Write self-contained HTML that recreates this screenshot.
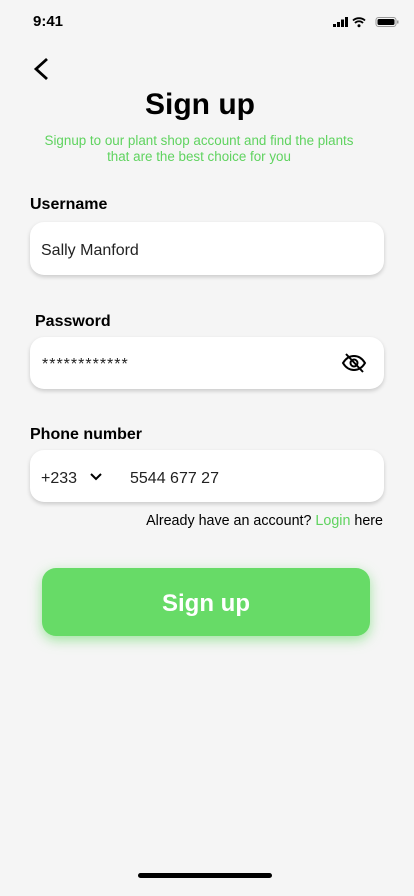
<!DOCTYPE html>
<html><head><style>
*{margin:0;padding:0;box-sizing:border-box}
body{width:414px;height:896px;background:#f5f5f5;font-family:"Liberation Sans",sans-serif;position:relative;overflow:hidden;color:#000}
.a{position:absolute}
.box{position:absolute;left:30px;width:354px;background:#fff;border-radius:14px;box-shadow:0 2px 4px rgba(0,0,0,.18)}
.lbl{position:absolute;font-weight:bold;font-size:16px}
.t{position:absolute;font-size:16px;color:#222}
</style></head><body>
<div class="a" style="left:33px;top:13px;font-weight:bold;font-size:15px">9:41</div>
<svg class="a" style="left:332px;top:16px" width="68" height="12" viewBox="0 0 68 12">
<rect x="1" y="8" width="3" height="3" fill="#000"/><rect x="5" y="6" width="3" height="5" fill="#000"/><rect x="9" y="3.5" width="3" height="7.5" fill="#000"/><rect x="13" y="1" width="3" height="10" fill="#000"/>
<path d="M21 4.5a9 9 0 0 1 12 0M23 7a5.5 5.5 0 0 1 8 0" stroke="#000" stroke-width="1.8" fill="none"/><circle cx="27" cy="9.8" r="1.5"/>
<rect x="44" y="1.5" width="20" height="9" rx="2.5" fill="none" stroke="#999"/><rect x="45.5" y="3" width="17" height="6" rx="1.5"/><rect x="65" y="4.5" width="1.5" height="3" fill="#999"/></svg>
<svg class="a" style="left:32px;top:57px" width="18" height="24"><path d="M15 2L4 12l11 10" stroke="#000" stroke-width="2.8" fill="none"/></svg>
<div class="a" style="left:0;width:400px;top:88px;text-align:center;font-weight:bold;font-size:30px">Sign up</div>
<div class="a" style="left:0;width:398px;top:133px;text-align:center;font-size:13.4px;color:#5fd35f;line-height:16px">Signup to our plant shop account and find the plants<br>that are the best choice for you</div>
<div class="lbl" style="left:30px;top:196px">Username</div>
<div class="box" style="top:222px;height:53px"></div>
<div class="t" style="left:41px;top:242px">Sally Manford</div>
<div class="lbl" style="left:35px;top:313px">Password</div>
<div class="box" style="top:337px;height:52px"></div>
<div class="t" style="left:42px;top:356px;letter-spacing:1px">************</div>
<svg class="a" style="left:341px;top:352px" width="26" height="22" viewBox="0 0 26 22"><path d="M2 11c3-5 7-7 11-7s8 2 11 7c-3 5-7 7-11 7S5 16 2 11z" stroke="#000" stroke-width="2" fill="none"/><circle cx="13" cy="11" r="3.5" stroke="#000" stroke-width="2" fill="none"/><path d="M5 2l17 18" stroke="#000" stroke-width="2"/></svg>
<div class="lbl" style="left:30px;top:426px">Phone number</div>
<div class="box" style="top:450px;height:52px"></div>
<div class="t" style="left:41px;top:470px">+233</div>
<svg class="a" style="left:90px;top:473px" width="12" height="8"><path d="M1 1l5 5 5-5" stroke="#000" stroke-width="2" fill="none"/></svg>
<div class="t" style="left:130px;top:470px">5544 677 27</div>
<div class="a" style="right:31px;top:513px;font-size:14.3px">Already have an account? <span style="color:#5fd35f">Login</span> here</div>
<div class="a" style="left:42px;top:568px;width:328px;height:68px;border-radius:14px;background:#67db67;box-shadow:0 4px 12px rgba(103,219,103,.6);color:#fff;font-weight:bold;font-size:24px;text-align:center;line-height:72px">Sign up</div>
<div class="a" style="left:138px;top:873px;width:134px;height:5px;border-radius:3px;background:#000"></div>
</body></html>
